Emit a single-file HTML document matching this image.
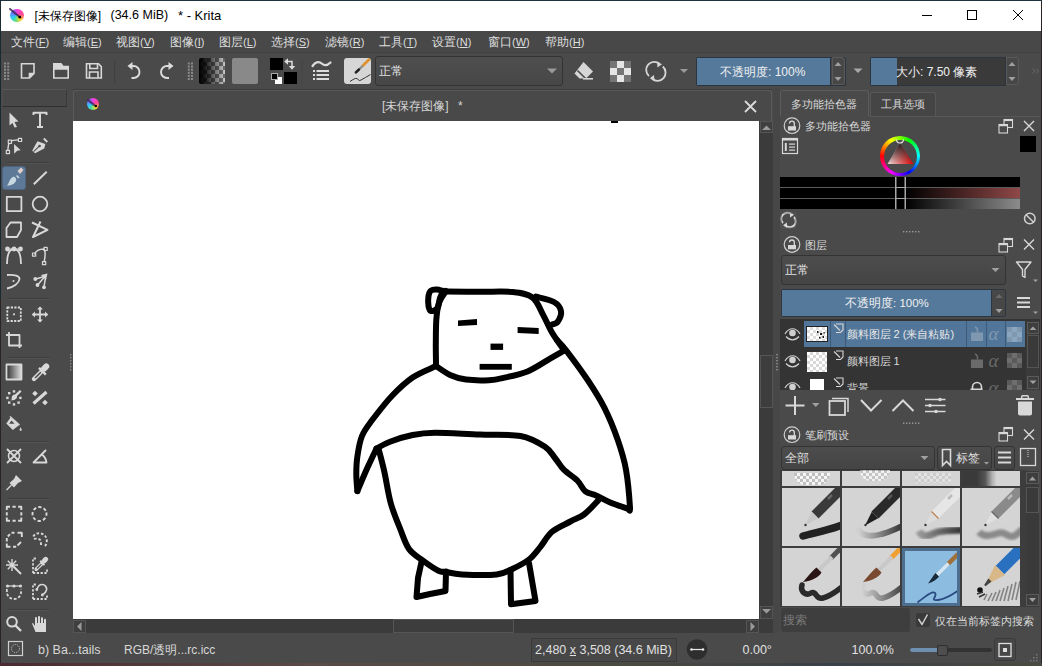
<!DOCTYPE html>
<html><head><meta charset="utf-8">
<style>
*{margin:0;padding:0;box-sizing:border-box}
html,body{width:1042px;height:666px;overflow:hidden;background:#3a2a2a;font-family:"Liberation Sans",sans-serif;}
.a{position:absolute}
.t{position:absolute;white-space:nowrap;color:#dcdcdc;font-size:12px;line-height:14px}
svg{position:absolute;overflow:visible}
</style></head><body>
<div class="a" style="left:0;top:0;width:1042px;height:666px;background:#2b2424"></div>
<div class="a" style="left:0;top:663px;width:1042px;height:3px;background:linear-gradient(90deg,#4a2a30,#5a4a48 30%,#4a4a40 60%,#3a4048 80%,#4a4a40)"></div>
<div class="a" style="left:0;top:0;width:1042px;height:1px;background:#1d3440"></div>
<div class="a" style="left:0;top:0;width:1px;height:300px;background:#1a2a30"></div>
<!-- window -->
<div class="a" style="left:1px;top:1px;width:1040px;height:662px;background:#4a4a4a"></div>
<!-- title bar -->
<div class="a" style="left:1px;top:1px;width:1040px;height:30px;background:#ffffff"></div>
<div class="a" style="left:10.3px;top:8.5px;width:13.4px;height:13.4px;border-radius:50%;background:conic-gradient(#f040e0 0deg,#ff4a90 80deg,#ffd830 140deg,#50e090 200deg,#30c8ff 250deg,#7a60ff 310deg,#f040e0 360deg)"></div>
<svg style="left:0;top:0" width="30" height="30"><path d="M10,9 L18.5,16" stroke="#3a2a50" stroke-width="2" stroke-linecap="round" opacity=".85"/><circle cx="19.8" cy="17.2" r="1.4" fill="#000"/></svg>
<div class="t" style="left:34.5px;top:8.5px;color:#000;font-size:12px;line-height:15px">[未保存图像]</div>
<div class="t" style="left:110.5px;top:8px;color:#000;font-size:12.5px;line-height:15px">(34.6 MiB)</div>
<div class="t" style="left:178px;top:8px;color:#000;font-size:13px;line-height:15px">* - Krita</div>
<svg style="left:0;top:0" width="1042" height="31" fill="none" stroke="#000" stroke-width="1">
<path d="M922,15.5 H932"/>
<rect x="967.5" y="10.5" width="9" height="9"/>
<path d="M1013,10 L1023,20 M1023,10 L1013,20"/>
</svg>
<!-- menu bar -->
<div class="a" style="left:1px;top:31px;width:1040px;height:22px;background:#484848"></div>
<div class="a" style="left:1px;top:52px;width:1040px;height:1px;background:#404040"></div>
<div class="t mi" style="left:11px;top:35px;color:#dedede">文件<span style="font-size:11px">(<u style="text-underline-offset:1px">F</u>)</span></div>
<div class="t mi" style="left:63px;top:35px;color:#dedede">编辑<span style="font-size:11px">(<u style="text-underline-offset:1px">E</u>)</span></div>
<div class="t mi" style="left:116px;top:35px;color:#dedede">视图<span style="font-size:11px">(<u style="text-underline-offset:1px">V</u>)</span></div>
<div class="t mi" style="left:170px;top:35px;color:#dedede">图像<span style="font-size:11px">(<u style="text-underline-offset:1px">I</u>)</span></div>
<div class="t mi" style="left:219px;top:35px;color:#dedede">图层<span style="font-size:11px">(<u style="text-underline-offset:1px">L</u>)</span></div>
<div class="t mi" style="left:271px;top:35px;color:#dedede">选择<span style="font-size:11px">(<u style="text-underline-offset:1px">S</u>)</span></div>
<div class="t mi" style="left:325px;top:35px;color:#dedede">滤镜<span style="font-size:11px">(<u style="text-underline-offset:1px">R</u>)</span></div>
<div class="t mi" style="left:379px;top:35px;color:#dedede">工具<span style="font-size:11px">(<u style="text-underline-offset:1px">T</u>)</span></div>
<div class="t mi" style="left:432px;top:35px;color:#dedede">设置<span style="font-size:11px">(<u style="text-underline-offset:1px">N</u>)</span></div>
<div class="t mi" style="left:488px;top:35px;color:#dedede">窗口<span style="font-size:11px">(<u style="text-underline-offset:1px">W</u>)</span></div>
<div class="t mi" style="left:545px;top:35px;color:#dedede">帮助<span style="font-size:11px">(<u style="text-underline-offset:1px">H</u>)</span></div>
<!-- toolbar -->
<div class="a" style="left:1px;top:53px;width:1040px;height:35px;background:#4a4a4a"></div>
<svg style="left:0;top:0" width="1042" height="90">
<g fill="#8a8a8a"><rect x="4.0" y="62.5" width="2" height="2"/><rect x="7.2" y="62.5" width="2" height="2"/><rect x="4.0" y="65.6" width="2" height="2"/><rect x="7.2" y="65.6" width="2" height="2"/><rect x="4.0" y="68.7" width="2" height="2"/><rect x="7.2" y="68.7" width="2" height="2"/><rect x="4.0" y="71.8" width="2" height="2"/><rect x="7.2" y="71.8" width="2" height="2"/><rect x="4.0" y="74.9" width="2" height="2"/><rect x="7.2" y="74.9" width="2" height="2"/><rect x="4.0" y="78.0" width="2" height="2"/><rect x="7.2" y="78.0" width="2" height="2"/></g>
<g fill="none" stroke="#d8d8d8" stroke-width="1.6">
 <path d="M21.5,63.8 H34 V73.5 L29.5,78 H21.5 Z"/>
 <path d="M29.5,78 V73.5 H34" fill="#d8d8d8"/>
 <path d="M53.8,63.8 H61 L63,66.5 H68.2 V78 H53.8 Z"/>
 <path d="M53.8,63.8 H61 L63,66.5 H68.2 V69.8 H53.8 Z" fill="#d8d8d8" stroke="none"/>
 <path d="M86.5,63.8 H98.5 L101.3,66.6 V78 H86.5 Z"/>
 <path d="M89.8,63.8 V68.5 H97.5 V63.8"/>
 <path d="M89.5,78 V72 H98 V78"/>
</g>
<rect x="114.2" y="60" width="1" height="23" fill="#3e3e3e"/>
<g fill="none" stroke="#dcdcdc" stroke-width="1.9">
 <path d="M131,66 H133.5 A6,6 0 0 1 133.5,78 H131.5"/>
 <path d="M169.5,66 H167 A6,6 0 0 0 167,78 H169"/>
</g>
<g fill="#dcdcdc">
 <path d="M127.5,66 L132.5,62 V70 Z"/>
 <path d="M173.5,66 L168.5,62 V70 Z"/>
</g>
<g fill="#8a8a8a"><rect x="187.8" y="62.5" width="2" height="2"/><rect x="191.0" y="62.5" width="2" height="2"/><rect x="187.8" y="65.6" width="2" height="2"/><rect x="191.0" y="65.6" width="2" height="2"/><rect x="187.8" y="68.7" width="2" height="2"/><rect x="191.0" y="68.7" width="2" height="2"/><rect x="187.8" y="71.8" width="2" height="2"/><rect x="191.0" y="71.8" width="2" height="2"/><rect x="187.8" y="74.9" width="2" height="2"/><rect x="191.0" y="74.9" width="2" height="2"/><rect x="187.8" y="78.0" width="2" height="2"/><rect x="191.0" y="78.0" width="2" height="2"/></g>
</svg>

<!-- toolbar part 2 -->
<div class="a" style="left:199px;top:58px;width:26px;height:26px;border-radius:2px;background:linear-gradient(90deg,#000 0%,rgba(0,0,0,.85) 25%,rgba(0,0,0,0) 100%),conic-gradient(#c8c8c8 25%,#6e6e6e 0 50%,#c8c8c8 0 75%,#6e6e6e 0) 0 0/8px 8px"></div>
<div class="a" style="left:232px;top:58px;width:26px;height:26px;border-radius:2px;background:#898989"></div>
<div class="a" style="left:270px;top:57.5px;width:12.5px;height:12.5px;background:#000"></div>
<div class="a" style="left:284px;top:72px;width:12.5px;height:12px;background:#000"></div>
<div class="a" style="left:274.5px;top:76.5px;width:7px;height:7px;background:#fff"></div>
<div class="a" style="left:270.5px;top:72.5px;width:7px;height:7px;background:#000;border:1px solid #aaa"></div>
<svg style="left:0;top:0" width="1042" height="90">
 <g fill="none" stroke="#dcdcdc" stroke-width="1.5"><path d="M287,61.5 H292 V66"/></g>
 <g fill="#dcdcdc"><path d="M284.2,61.5 L288,58.3 V64.7 Z"/><path d="M292,69.8 L288.8,66 H295.2 Z"/></g>
 <rect x="301.5" y="60" width="1" height="23" fill="#444"/>
 <path d="M312.5,66 C316,61 319.5,61.5 322,63.8 C324.5,66 327,66 330.5,62.5" fill="none" stroke="#dcdcdc" stroke-width="2.2" stroke-linecap="round"/>
 <g fill="#dcdcdc"><rect x="313" y="70" width="2" height="2"/><rect x="316.5" y="70" width="12.5" height="2"/>
 <rect x="313" y="74" width="2" height="2"/><rect x="316.5" y="74" width="12.5" height="2"/>
 <rect x="313" y="78" width="2" height="2"/><rect x="316.5" y="78" width="12.5" height="2"/></g>
</svg>
<div class="a" style="left:344px;top:58px;width:26.5px;height:26px;border-radius:3px;background:#d6d6d6;overflow:hidden">
 <svg style="left:0;top:0" width="27" height="26">
  <path d="M26,0.5 L18.5,8" stroke="#e0902a" stroke-width="2.6"/>
  <path d="M18.8,7.7 L14.5,12" stroke="#8a8a8a" stroke-width="2.2"/>
  <path d="M15,11.5 L11.8,14.5" stroke="#222" stroke-width="2.4" stroke-linecap="round"/>
  <path d="M6,23.5 C9,21.5 11,20 13,20.5 C15,21.5 14,23.5 17,22 C20,20.5 23,18.5 26.5,16.5" fill="none" stroke="#333" stroke-width="1"/>
 </svg>
</div>
<!-- blend combo -->
<div class="a" style="left:375px;top:56px;width:188px;height:30px;border:1px solid #333;border-radius:3px;background:linear-gradient(#4e4e4e,#474747)"></div>
<div class="t" style="left:379px;top:64px;font-size:12px;color:#e0e0e0">正常</div>
<svg style="left:0;top:0" width="1042" height="90"><path d="M547,68.5 H557 L552,73.5 Z" fill="#9a9a9a"/></svg>
<svg style="left:0;top:0" width="1042" height="90">
 <g fill="#d6d6d6">
  <path d="M583.5,62 L593,71.5 L586,78.5 H579.5 L574.5,73.5 Z"/>
 </g>
 <path d="M577.5,70.5 L586.5,79.5" stroke="#4a4a4a" stroke-width="1.6"/>
 <rect x="583" y="78" width="10" height="1.6" fill="#d6d6d6"/>
 <g fill="#757575"><rect x="610" y="61" width="21" height="21"/></g>
 <g fill="#e6e6e6"><rect x="617" y="61" width="7" height="7"/><rect x="610" y="68" width="7" height="7"/><rect x="624" y="68" width="7" height="7"/><rect x="617" y="75" width="7" height="7"/></g>
 <g fill="none" stroke="#d6d6d6" stroke-width="1.8">
  <path d="M649,76 A8,8 0 0 1 659.5,63.8"/>
  <path d="M662.8,66.5 A8,8 0 0 1 652,78.8"/>
 </g>
 <g fill="#d6d6d6"><path d="M657,61.8 L662,64.2 L657.5,67.5 Z"/><path d="M654.5,80.8 L649.8,78.2 L654,75 Z"/></g>
 <path d="M680,69 H688 L684,73 Z" fill="#9a9a9a"/>
</svg>
<!-- opacity slider -->
<div class="a" style="left:696px;top:56.5px;width:150px;height:29px;border:1px solid #2a3540;border-radius:2px;background:#474747"></div>
<div class="a" style="left:697px;top:57.5px;width:134px;height:27px;background:#55799b;border-right:1px solid #2a3540"></div>
<div class="a" style="left:832px;top:57px;width:13px;height:28px;border:1px solid #5a5a5a;border-radius:0 3px 3px 0"></div>
<div class="t" style="left:720px;top:64.5px;font-size:12px;color:#f0f0f0">不透明度: 100%</div>
<svg style="left:0;top:0" width="1042" height="90">
 <path d="M834.5,66 L838,62 L841.5,66 Z M834.5,77 L838,81 L841.5,77 Z" fill="#a0a0a0"/>
 <path d="M853.5,68.5 H862.5 L858,73 Z" fill="#a8a8a8"/>
</svg>
<!-- size slider -->
<div class="a" style="left:870px;top:56.5px;width:136px;height:29px;border:1px solid #2a3540;border-radius:2px 0 0 2px;background:#3a3a3a"></div>
<div class="a" style="left:871px;top:57.5px;width:26px;height:27px;background:#55799b"></div>
<div class="a" style="left:1006px;top:57px;width:13px;height:28px;border:1px solid #5a5a5a;border-radius:0 3px 3px 0;background:#474747"></div>
<div class="t" style="left:896px;top:64.5px;font-size:12px;color:#f0f0f0">大小: 7.50 像素</div>
<svg style="left:0;top:0" width="1042" height="90">
 <path d="M1008.5,66 L1012,62 L1015.5,66 Z M1008.5,77 L1012,81 L1015.5,77 Z" fill="#a0a0a0"/>
</svg>
<!-- left toolbox -->
<div class="a" style="left:1px;top:88px;width:71px;height:545px;background:#4a4a4a"></div>
<div class="a" style="left:1.5px;top:89px;width:65px;height:18px;border:1px solid #3a3a3a;border-top-color:#585858;border-left-color:#505050;border-bottom-color:#2e2e2e;background:#484848"></div>

<div class="a" style="left:2px;top:166px;width:23.5px;height:24px;border-radius:3px;background:#5d7997;border:1px solid #4d6580"></div>
<svg style="left:0;top:0" width="80" height="640">
<g fill="none" stroke="#d8d8d8" stroke-width="1.8" stroke-linejoin="round">
 <!-- separators -->
 <path d="M7,162.5 H50 M7,298.5 H50 M7,357.5 H50 M7,441.5 H50 M7,498.5 H50 M7,609.5 H50" stroke="#3e3e3e" stroke-width="1"/><path d="M7,163.5 H50 M7,299.5 H50 M7,358.5 H50 M7,442.5 H50 M7,499.5 H50 M7,610.5 H50" stroke="#535353" stroke-width="1"/>
 <!-- A: arrow, T -->
 <path d="M9.5,112.5 L18.5,121.5 L14.5,122 L17,127 L14.5,127.5 L12.5,123 L9.5,125.5 Z" fill="#d8d8d8" stroke="none"/>
 <path d="M33.5,115 V112.8 H46.5 V115 M40,113 V127 M37,127 H43" stroke-width="2"/>
 <!-- B: shape edit, pen -->
 <path d="M7.9,150.5 C8,146.5 8.5,143.5 9.9,141.7 C12,140.3 15.5,139.9 18.5,139.9" stroke-width="1.4"/>
 <rect x="8.3" y="140.1" width="3.2" height="3.2" fill="#4a4a4a" stroke-width="1.2"/>
 <rect x="18.4" y="138.3" width="3.2" height="3.2" fill="#4a4a4a" stroke-width="1.2"/>
 <rect x="6.3" y="150.4" width="3.2" height="3.2" fill="#4a4a4a" stroke-width="1.2"/>
 <path d="M14,144 L20.7,150.3 L17.2,150.8 L14.2,153.7 Z" fill="#d8d8d8" stroke="none"/>
 <path d="M37.5,141.2 L45.4,144 L44.2,148.4 L35.1,153.2 L32.2,150.8 L35.6,144.6 Z" fill="#d8d8d8" stroke="none"/>
 <path d="M43.8,138.5 L47.3,142" stroke-width="1.8"/>
 <path d="M39.4,146.2 L33.6,151.6" stroke="#4a4a4a" stroke-width="1.1"/>
 <circle cx="39.6" cy="146" r="1.3" fill="#4a4a4a" stroke="none"/>
 <!-- C: brush, line -->
 <path d="M17.5,171 L21,167.5 L23.5,170 L20,174 Z" fill="#e0d0cc" stroke="none"/>
 <path d="M16.5,175.5 L19,178" stroke="#c8d8e0" stroke-width="1.6"/>
 <path d="M14.5,177 C16,178 17,179.5 15.5,182 C13,185 9,186 6.5,185.5 C9,184.5 8.5,181.5 11,178.5 C12.5,177 13.5,176.5 14.5,177 Z" fill="#c8d8e0" stroke="none"/>
 <path d="M33.8,184.2 L46.7,171.8" stroke-width="2"/>
 <!-- D -->
 <rect x="6.8" y="196.8" width="14.6" height="14.4" stroke-width="1.8"/>
 <circle cx="40" cy="204" r="7.3" stroke-width="1.8"/>
 <!-- E: polygon, polyline -->
 <path d="M10.5,222.5 H21 V230 L17,237 H6.5 V228 Z"/>
 <path d="M32,222.5 L47.5,229.8 L33,237 L40.5,221.5" stroke-width="2"/>
 <!-- F: bezier, freehand path -->
 <path d="M7,264 C7,252 10,249 14,249 C18,249 21,252 21,264"/>
 <path d="M6,249 H22" stroke-width="1"/>
 <circle cx="7.5" cy="249" r="1.5" fill="#d8d8d8"/><circle cx="14" cy="249" r="1.5" fill="#d8d8d8"/><circle cx="20.5" cy="249" r="1.5" fill="#d8d8d8"/>
 <path d="M34.5,254.5 C36,250 39,249 44,249 C46,252 45,258 44,262.5" stroke-width="1.5"/>
 <rect x="32.5" y="253" width="3.2" height="3.2" stroke-width="1.2"/>
 <rect x="44" y="247.3" width="3.2" height="3.2" stroke-width="1.2"/>
 <rect x="42.5" y="261.5" width="3.2" height="3.2" stroke-width="1.2"/>
 <!-- G: dyna, multibrush -->
 <path d="M7,288.5 C14,287 19,283 19.5,279 C19.5,276 15,274.5 7,275"/>
 <circle cx="13.5" cy="281" r="1" fill="#d8d8d8" stroke="none"/>
 <path d="M41,275 L47.5,273.5 L46,280 Z" fill="#d8d8d8" stroke="none"/>
 <path d="M44,276.5 L36,279 M44.5,277 L38,284.5 M45.5,278 L44,286.5" stroke-width="1.5"/>
 <circle cx="35.3" cy="279" r="1.9" fill="#d8d8d8" stroke="none"/><circle cx="37.5" cy="285" r="1.9" fill="#d8d8d8" stroke="none"/><circle cx="44" cy="287.3" r="1.9" fill="#d8d8d8" stroke="none"/>
 <!-- H: transform, move -->
 <rect x="7.3" y="307.5" width="13.5" height="13.5" stroke-dasharray="2.2 1.3" stroke-width="1.8"/>
 <circle cx="14" cy="314.3" r="1.1" fill="#d8d8d8" stroke="none"/>
 <path d="M32.5,314.5 H47.5 M40,307 V322" stroke-width="1.8"/>
 <path d="M32,314.5 L35,311.5 V317.5 Z M48,314.5 L45,311.5 V317.5 Z M40,306.5 L37,309.5 H43 Z M40,322.5 L37,319.5 H43 Z" fill="#d8d8d8" stroke="none"/>
 <!-- I: crop -->
 <path d="M9,332 V345.5 H22 M6,335 H19.5 V348"/>
</g>
</svg>
<svg style="left:0;top:0" width="80" height="640">
<defs><linearGradient id="gg" x1="0" x2="1" y1="0" y2="0"><stop offset="0" stop-color="#303030"/><stop offset="1" stop-color="#e0e0e0"/></linearGradient></defs>
<g fill="none" stroke="#d8d8d8" stroke-width="1.8" stroke-linejoin="round">
 <!-- J: gradient, picker -->
 <rect x="6.5" y="364.5" width="15" height="15" stroke-width="1.8" fill="url(#gg)"/>
 <rect x="42.2" y="363" width="6" height="9" rx="3" fill="#d8d8d8" stroke="none" transform="rotate(45 45.2 367.5)"/>
 <path d="M39,367.8 L45.8,374.6" stroke-width="2.4"/>
 <path d="M41.5,371.5 L34,379" stroke-width="4.4" stroke-linecap="round"/>
 <path d="M40.8,372.2 L35,378" stroke="#4a4a4a" stroke-width="1.5"/>
 <!-- K: smart patch, % -->
 <path d="M12,399.5 C11,397 12.5,394.5 15,394.5 L20,390 L21.5,391.5 L17,396 C17.5,399 14,401 10,400 Z" fill="#d8d8d8" stroke="none"/>
 <g fill="#d8d8d8" stroke="none"><rect x="8" y="392" width="2.4" height="2.4"/><rect x="12.8" y="390.2" width="2.4" height="2.4"/><rect x="6.2" y="396.7" width="2.4" height="2.4"/><rect x="19.2" y="396.7" width="2.4" height="2.4"/><rect x="8" y="401.4" width="2.4" height="2.4"/><rect x="12.8" y="403.2" width="2.4" height="2.4"/><rect x="17.4" y="401.4" width="2.4" height="2.4"/></g>
 <path d="M33.5,403.5 L46.5,392" stroke-width="3.2"/>
 <rect x="33" y="391.5" width="4" height="4" fill="#d8d8d8" stroke="none" transform="rotate(45 35 393.5)"/>
 <rect x="43" y="400.5" width="4" height="4" fill="#d8d8d8" stroke="none" transform="rotate(45 45 402.5)"/>
 <!-- L: fill -->
 <path d="M10.6,417.5 L6.3,423.5 L12.8,430 L19.3,424.9 Z" fill="#d8d8d8" stroke="none"/>
 <path d="M11.4,420.6 L9.2,423.8 H14.6 Z" fill="#4a4a4a" stroke="none"/>
 <path d="M10,416.5 L19.5,425" stroke-width="1.4"/>
 <path d="M20.5,427 L19.5,430 A1.2,1.2 0 0 0 21.8,430 Z" fill="#d8d8d8" stroke="none"/>
 <!-- M: assistant, measure -->
 <circle cx="14" cy="456" r="5.5" stroke-width="1.5"/>
 <path d="M7,449 L21,463 M21,449 L7,463" stroke-width="1.8"/>
 <path d="M46,450 L33.5,462.5 H46.5 C46,459 44.5,456.5 42,454.5" stroke-width="1.8"/>
 <!-- N: pin -->
 <path d="M16,475 L22,481 L18,483 L14,487.5 L9.5,483 L14,479 Z" fill="#d8d8d8" stroke="none"/>
 <path d="M11.5,485 L6.5,490" stroke-width="1.2"/>
 <!-- O: rect select, ellipse select -->
 <path d="M6.8,510.0 V506.8 H10.0 M18.1,506.8 H21.3 V510.0 M21.3,517.6 V520.8 H18.1 M10.0,520.8 H6.8 V517.6 M12.5,506.8 H15.7 M12.5,520.8 H15.7 M6.8,512.2 V515.4 M21.3,512.2 V515.4" stroke-width="1.9"/>
 <circle cx="39.5" cy="514" r="7" stroke-dasharray="3.3 2.2" stroke-width="1.9" transform="rotate(-12 39.5 514)"/>
 <!-- P: polygon select, freehand select -->
 <path d="M21.8,537 V532.8 H17.5 M14.5,532.8 H11.5 M10,534.2 L7.8,536.5 M6.8,538 V541.5 M6.8,543.5 V546.8 H10.5 M13,546.8 H16.2 M17.5,545.5 L21,542" stroke-width="1.9"/>
 <path d="M33.3,536.5 C35,533.5 38,532.8 41,533.5 C45,534.5 47,537.5 46.8,541.5 C46.5,544 45.5,546 44,547.2 M34,538.9 C36,538.5 38.5,538.5 40,539.8 C41,541.5 41,544 41,546" stroke-dasharray="2.6 1.8" stroke-width="1.9"/>
 <!-- Q: magic wand, similar -->
 <path d="M13.5,566.5 L21,574" stroke-width="2"/>
 <path d="M12,559 V571 M6,565 H18 M7.8,560.8 L16.2,569.2 M16.2,560.8 L7.8,569.2" stroke-width="1.4"/>
 <path d="M33,573 V558.5 H37.5 M33,573 H47 V568.5" stroke-width="1.8" stroke-dasharray="2.2 1.6"/>
 <rect x="42.5" y="556.5" width="5" height="7" rx="2.5" fill="#d8d8d8" stroke="none" transform="rotate(45 45 560)"/>
 <path d="M40.2,560.8 L44.5,565.1" stroke-width="2"/>
 <path d="M42,563.5 L36.2,569.3" stroke-width="3.6" stroke-linecap="round"/>
 <path d="M41.3,564.2 L37,568.5" stroke="#4a4a4a" stroke-width="1.2"/>
 <!-- R: bezier select, magnetic -->
 <path d="M7,586 H21" stroke-width="1.2"/>
 <circle cx="7.5" cy="586" r="1.6" fill="#d8d8d8" stroke="none"/><circle cx="14" cy="586" r="1.6" fill="#d8d8d8" stroke="none"/><circle cx="20.5" cy="586" r="1.6" fill="#d8d8d8" stroke="none"/>
 <path d="M7,589 C6,596 10,599 14,599 C18,599 22,596 21,589" stroke-dasharray="2.8 1.8"/>
 <path d="M33,599 V584.5 H37 M33,599 H47 V595" stroke-width="1.8" stroke-dasharray="2.2 1.6"/>
 <path d="M37,589.5 C38,585.5 40,584.5 42,584.5 C45,584.5 47,587 46.5,590 C46,592 44,594 42.5,595" stroke-width="1.6"/>
 <circle cx="36.8" cy="589.5" r="1.4" fill="#d8d8d8" stroke="none"/><circle cx="42.3" cy="595" r="1.4" fill="#d8d8d8" stroke="none"/>
 <!-- S: zoom, hand -->
 <circle cx="12" cy="621.8" r="4.8" stroke-width="2"/>
 <path d="M15.5,625.5 L21,631" stroke-width="2.4"/>
 <g fill="#d8d8d8" stroke="none">
  <rect x="35" y="617" width="2" height="9" rx="0.9"/><rect x="38" y="616" width="2" height="10" rx="0.9"/><rect x="41" y="617.3" width="2" height="9" rx="0.9"/><rect x="44" y="618.8" width="2" height="8" rx="0.9"/>
  <path d="M35,623 H46 V632 H35.5 L32,623.5 L33,623 L35,626 Z"/>
 </g>
</g>
</svg>
<!-- canvas tab -->
<div class="a" style="left:73px;top:89px;width:699px;height:1px;background:#3c3c3c"></div>
<div class="a" style="left:73px;top:90px;width:699px;height:31px;background:#494949;border:1px solid #5a5a5a;border-bottom:none;border-radius:3px 3px 0 0"></div>
<div class="a" style="left:86.7px;top:97.7px;width:12.6px;height:12.6px;border-radius:50%;background:conic-gradient(#f040e0 0deg,#ff4a90 80deg,#ffd830 140deg,#50e090 200deg,#30c8ff 250deg,#7a60ff 310deg,#f040e0 360deg)"></div>
<svg style="left:0;top:0" width="800" height="130">
 <path d="M88,100 L94,104.8" stroke="#402a60" stroke-width="2.2" stroke-linecap="round" opacity=".85"/><circle cx="95.8" cy="106" r="1.3" fill="#000"/>
 <path d="M745,101 L756,112 M756,101 L745,112" stroke="#dadada" stroke-width="1.8"/>
</svg>
<div class="t" style="left:382px;top:99px;color:#d4d4d4">[未保存图像]</div>
<div class="t" style="left:458px;top:99px;color:#d4d4d4">*</div>
<!-- canvas -->
<div class="a" style="left:73px;top:121px;width:686px;height:498px;background:#ffffff;overflow:hidden">
<svg width="1042" height="666" style="left:-73px;top:-121px" fill="none" stroke="#000" stroke-width="6" stroke-linecap="round" stroke-linejoin="round">
<path d="M446.0,291.5 C451.7,291.6 468.9,291.7 480.0,291.8 C491.1,291.9 503.9,291.1 512.6,292.0 C521.4,292.9 527.4,293.7 532.5,297.5 C537.6,301.3 539.8,308.8 543.0,314.6 C546.2,320.5 548.7,326.9 552.0,332.6 C555.3,338.3 561.2,346.1 563.0,348.8"/>
<path d="M446.0,291.0 C444.8,293.0 440.6,298.2 439.0,303.0 C437.4,307.8 436.8,313.0 436.3,320.0 C435.8,327.0 435.9,337.7 435.8,345.0 C435.8,352.3 436.0,360.8 436.0,364.0"/>
<path d="M436.0,366.0 C438.4,367.6 445.7,373.0 450.7,375.3 C455.7,377.6 459.6,378.8 466.0,379.6 C472.4,380.4 482.6,380.5 489.0,380.2 C495.4,379.9 498.1,379.1 504.5,377.6 C510.9,376.2 519.8,374.7 527.5,371.5 C535.2,368.3 544.4,361.9 550.5,358.4 C556.6,354.9 561.8,352.0 564.0,350.7"/>
<path d="M443.5,291.0 C442.9,292.2 441.0,295.2 440.0,298.0 C439.0,300.8 439.0,305.8 437.5,308.0 C436.0,310.2 432.5,311.3 431.0,311.0 C429.5,310.7 428.9,308.5 428.5,306.0 C428.1,303.5 428.1,298.6 428.5,296.0 C428.9,293.4 429.6,291.6 431.0,290.5 C432.4,289.4 435.0,289.4 437.0,289.5 C439.0,289.6 442.0,290.8 443.0,291.0"/>
<path d="M536.0,296.6 C539.0,297.5 549.8,299.6 554.0,302.0 C558.2,304.4 560.4,307.7 561.0,311.0 C561.6,314.3 559.2,319.6 557.7,321.8 C556.2,324.1 553.0,324.1 552.0,324.5"/>
<path d="M435.4,366.3 C431.6,368.2 419.8,372.6 412.6,377.5 C405.4,382.4 399.1,388.4 392.3,395.5 C385.5,402.6 377.1,413.6 372.0,420.3 C366.9,427.1 364.4,430.0 362.0,436.0 C359.6,442.0 358.3,450.0 357.4,456.4 C356.4,462.8 356.3,468.6 356.3,474.4 C356.3,480.2 357.2,488.5 357.4,491.3"/>
<path d="M357.4,491.0 C359.1,487.1 364.3,474.7 367.5,467.6 C370.7,460.5 375.0,451.7 376.5,448.5"/>
<path d="M376.5,448.5 C378.8,447.4 384.0,443.9 390.0,441.7 C396.0,439.4 405.1,436.5 412.6,435.0 C420.1,433.5 423.8,432.8 435.0,432.7 C446.2,432.6 465.8,434.1 480.0,434.6 C494.2,435.2 509.7,434.0 520.5,436.0 C531.3,438.0 539.1,443.0 545.0,446.8 C550.9,450.6 552.6,455.2 555.7,459.0 C558.8,462.8 560.2,466.1 563.8,469.7 C567.4,473.3 573.7,476.9 577.3,480.5 C580.9,484.1 582.3,488.9 585.4,491.4 C588.5,493.9 592.0,493.6 596.0,495.4 C600.0,497.2 604.3,499.9 609.7,502.2 C615.1,504.5 625.5,507.9 628.6,509.0"/>
<path d="M378.8,449.6 C379.7,453.3 382.4,463.1 384.4,472.0 C386.4,480.9 388.1,493.6 390.7,503.0 C393.3,512.4 396.9,520.7 400.0,528.4 C403.1,536.1 405.2,543.6 409.0,549.0 C412.8,554.4 418.0,556.9 423.0,560.6 C428.0,564.3 435.2,569.2 439.0,571.0 C442.8,572.8 444.8,571.4 446.0,571.5"/>
<path d="M446.0,572.0 C448.7,572.4 453.6,574.0 462.0,574.4 C470.4,574.8 488.2,575.3 496.7,574.4 C505.2,573.5 507.4,571.2 512.8,568.7 C518.2,566.2 524.4,563.1 529.0,559.5 C533.6,555.9 536.6,551.4 540.4,546.8 C544.2,542.2 547.0,536.0 552.0,531.8 C557.0,527.6 565.1,524.4 570.4,521.5 C575.7,518.6 579.4,518.0 584.0,514.5 C588.6,511.0 595.7,503.0 598.0,500.7"/>
<path d="M421.8,560.6 L418,578 L416.5,597 L430,594 L445.5,591 L446,572"/>
<path d="M510.5,570 L511,604.2 L535.5,601 L529,563"/>
<path d="M557.0,340.0 C558.6,341.8 561.3,344.1 566.5,350.8 C571.7,357.6 581.7,371.0 588.0,380.5 C594.3,390.0 599.3,397.7 604.3,407.6 C609.3,417.5 614.2,429.6 617.8,440.0 C621.4,450.4 624.0,458.4 626.0,469.7 C628.0,481.0 629.6,501.1 630.0,507.6 C630.4,514.1 628.8,508.8 628.6,509.0"/>
<g fill="#000" stroke="none">
<path d="M458,320.5 L477,319 V325 L458,326 Z"/>
<path d="M517.6,327 L538.7,328 V334 L517.6,333 Z"/>
<rect x="490.5" y="343.6" width="12.6" height="6.3"/>
<rect x="479.6" y="363.9" width="32.2" height="5.8"/>
</g>
</svg>
<div class="a" style="left:538px;top:0;width:7px;height:2px;background:#000"></div>
</div>
<!-- v scrollbar -->
<div class="a" style="left:759px;top:121px;width:14px;height:498px;background:#3b3b3b"></div>
<div class="a" style="left:760px;top:121px;width:13px;height:12px;border:1px solid #555;background:#3f3f3f"></div>
<div class="a" style="left:760px;top:355px;width:13px;height:53px;border:1px solid #555;background:#3d3d3d"></div>
<div class="a" style="left:760px;top:606px;width:13px;height:13px;border:1px solid #555;background:#3f3f3f"></div>
<!-- h scrollbar -->
<div class="a" style="left:73px;top:619px;width:700px;height:14px;background:#3b3b3b"></div>
<div class="a" style="left:73px;top:620px;width:13px;height:13px;border:1px solid #555;background:#3f3f3f"></div>
<div class="a" style="left:393px;top:619px;width:121px;height:14px;border:1px solid #555;background:#3d3d3d"></div>
<div class="a" style="left:746px;top:620px;width:13px;height:13px;border:1px solid #555;background:#3f3f3f"></div>
<svg style="left:0;top:0" width="800" height="640">
 <path d="M762,130 L766.5,125.5 L771,130 Z M762,609 L766.5,613.5 L771,609 Z" fill="#9a9a9a"/>
 <path d="M81.5,622 L77,626.5 L81.5,631 Z M750.5,622 L755,626.5 L750.5,631 Z" fill="#9a9a9a"/>
</svg>
<div class="a" style="left:773px;top:88px;width:7px;height:545px;background:#474747"></div>

<!-- right dock -->
<div class="a" style="left:780px;top:88px;width:260px;height:545px;background:#4a4a4a"></div>
<div class="a" style="left:870px;top:92px;width:66px;height:25px;background:#454545;border:1px solid #575757;border-bottom:none;border-radius:3px 3px 0 0"></div>
<div class="a" style="left:780px;top:90px;width:89px;height:27px;background:#4a4a4a;border:1px solid #5c5c5c;border-bottom:none;border-radius:3px 3px 0 0"></div>
<div class="a" style="left:780px;top:116px;width:260px;height:1px;background:#575757"></div>
<div class="a" style="left:780px;top:116px;width:89px;height:1px;background:#4a4a4a"></div>
<div class="t" style="left:791px;top:97px;font-size:11px;color:#d8d8d8">多功能拾色器</div>
<div class="t" style="left:881px;top:97px;font-size:11px;color:#d8d8d8">工具选项</div>
<svg style="left:0;top:0" width="1042" height="666">
<circle cx="792.0" cy="125.7" r="7.8" fill="none" stroke="#d0d0d0" stroke-width="1.2"/>
<rect x="788.0" y="126.2" width="8" height="4.3" fill="#d8d8d8"/>
<path d="M794.3,126.7 V123.7 A2.4,2.4 0 0 0 789.5,123.5" fill="none" stroke="#d8d8d8" stroke-width="1.3"/>
<g fill="none" stroke="#d8d8d8" stroke-width="1.1"><rect x="1004.0" y="119.5" width="8.5" height="8"/><path d="M1004.0,120.1 H1012.5" stroke-width="2"/></g>
<rect x="999.0" y="124.5" width="8.5" height="8.5" fill="#4a4a4a"/>
<g fill="none" stroke="#d8d8d8" stroke-width="1.1"><rect x="999.0" y="124.5" width="8.5" height="8.5"/><path d="M999.0,125.2 H1007.5" stroke-width="2"/></g>
<path d="M1024.0,121.0 l10,10 M1034.0,121.0 l-10,10" stroke="#d8d8d8" stroke-width="1.4"/>
<circle cx="792.0" cy="244.5" r="7.8" fill="none" stroke="#d0d0d0" stroke-width="1.2"/>
<rect x="788.0" y="245.0" width="8" height="4.3" fill="#d8d8d8"/>
<path d="M794.3,245.5 V242.5 A2.4,2.4 0 0 0 789.5,242.3" fill="none" stroke="#d8d8d8" stroke-width="1.3"/>
<g fill="none" stroke="#d8d8d8" stroke-width="1.1"><rect x="1004.0" y="238.5" width="8.5" height="8"/><path d="M1004.0,239.1 H1012.5" stroke-width="2"/></g>
<rect x="999.0" y="243.5" width="8.5" height="8.5" fill="#4a4a4a"/>
<g fill="none" stroke="#d8d8d8" stroke-width="1.1"><rect x="999.0" y="243.5" width="8.5" height="8.5"/><path d="M999.0,244.2 H1007.5" stroke-width="2"/></g>
<path d="M1024.0,239.5 l10,10 M1034.0,239.5 l-10,10" stroke="#d8d8d8" stroke-width="1.4"/>
<circle cx="792.0" cy="434.7" r="7.8" fill="none" stroke="#d0d0d0" stroke-width="1.2"/>
<rect x="788.0" y="435.2" width="8" height="4.3" fill="#d8d8d8"/>
<path d="M794.3,435.7 V432.7 A2.4,2.4 0 0 0 789.5,432.5" fill="none" stroke="#d8d8d8" stroke-width="1.3"/>
<g fill="none" stroke="#d8d8d8" stroke-width="1.1"><rect x="1004.0" y="427.5" width="8.5" height="8"/><path d="M1004.0,428.1 H1012.5" stroke-width="2"/></g>
<rect x="999.0" y="432.5" width="8.5" height="8.5" fill="#4a4a4a"/>
<g fill="none" stroke="#d8d8d8" stroke-width="1.1"><rect x="999.0" y="432.5" width="8.5" height="8.5"/><path d="M999.0,433.2 H1007.5" stroke-width="2"/></g>
<path d="M1024.0,429.5 l10,10 M1034.0,429.5 l-10,10" stroke="#d8d8d8" stroke-width="1.4"/>
</svg>
<div class="t" style="left:805px;top:119px;font-size:11px;color:#d8d8d8">多功能拾色器</div>


<!-- color selector -->
<svg style="left:0;top:0" width="1042" height="666">
 <g fill="none" stroke="#d8d8d8" stroke-width="1.2"><rect x="782.5" y="138.5" width="15" height="15"/></g>
 <rect x="782" y="138" width="16" height="2.5" fill="#d8d8d8"/>
 <rect x="784.8" y="143" width="2" height="8" fill="#d8d8d8"/>
 <g fill="#d8d8d8"><rect x="789" y="143.5" width="6" height="1.2"/><rect x="789" y="146.5" width="6" height="1.2"/><rect x="789" y="149.5" width="6" height="1.2"/></g>
 <rect x="1020" y="136" width="16" height="16" fill="#000"/>
</svg>
<div class="a" style="left:880px;top:136px;width:40px;height:40px;border-radius:50%;background:conic-gradient(from 270deg,#ff0000,#ffff00,#00ff00,#00ffff,#0000ff,#ff00ff,#ff0000)"></div>
<div class="a" style="left:883.5px;top:139.5px;width:33px;height:33px;border-radius:50%;background:#4a4a4a"></div>
<svg style="left:0;top:0" width="1042" height="666">
 <defs>
  <linearGradient id="tr1" x1="0" y1="0" x2="1" y2="0"><stop offset="0" stop-color="#f0e0e0"/><stop offset="1" stop-color="#e00000"/></linearGradient>
  <linearGradient id="tr2" x1="0" y1="0" x2="0" y2="1"><stop offset="0" stop-color="#202020" stop-opacity="1"/><stop offset="1" stop-color="#202020" stop-opacity="0"/></linearGradient>
  <linearGradient id="sl2" x1="0" y1="0" x2="1" y2="0"><stop offset="0" stop-color="#000"/><stop offset="1" stop-color="#904848"/></linearGradient>
  <linearGradient id="sl3" x1="0" y1="0" x2="1" y2="0"><stop offset="0" stop-color="#000"/><stop offset="1" stop-color="#8c8c8c"/></linearGradient>
 </defs>
 <path d="M900,143 L913.5,164 H887.5 Z" fill="url(#tr1)"/>
 <path d="M900,143 L913.5,164 H887.5 Z" fill="url(#tr2)"/>
 <path d="M896.5,139.5 A3.5,3.5 0 0 0 903.5,139.5" fill="none" stroke="#e8e8e8" stroke-width="1.2"/>
 <rect x="780" y="177" width="240" height="10" fill="#000"/>
 <rect x="780" y="188" width="240" height="10" fill="#000"/>
 <rect x="905" y="188" width="115" height="10" fill="url(#sl2)"/>
 <rect x="780" y="199" width="240" height="10" fill="#000"/>
 <rect x="905" y="199" width="115" height="10" fill="url(#sl3)"/>
 <rect x="780" y="187" width="240" height="1" fill="#5a5a5a"/>
 <rect x="780" y="198" width="240" height="1" fill="#5a5a5a"/>
 <g fill="#a8a8a8"><rect x="895" y="177" width="1.5" height="32"/><rect x="904.5" y="177" width="1.5" height="32"/>
 <rect x="895" y="187" width="11" height="1"/><rect x="895" y="198" width="11" height="1"/></g>
 <g fill="none" stroke="#d8d8d8" stroke-width="1.8">
  <path d="M783,223 A6,6 0 0 1 791.5,214.5"/><path d="M794,217 A6,6 0 0 1 785.5,225.5"/>
 </g>
 <g fill="#d8d8d8"><path d="M790,212 L794,214.8 L790,217.5 Z"/><path d="M787,228 L783,225.2 L787,222.5 Z"/></g>
 <rect x="781" y="213" width="15" height="15" rx="2" fill="none" stroke="#5a5a5a" stroke-width="0.8"/>
 <circle cx="1029.8" cy="218.5" r="5.3" fill="none" stroke="#d0d0d0" stroke-width="1.5"/>
 <path d="M1026,214.8 L1033.6,222.2" stroke="#d0d0d0" stroke-width="1.5"/>
 <g fill="#9a9a9a">
  <rect x="903" y="231" width="1.4" height="1.4"/><rect x="906" y="231" width="1.4" height="1.4"/><rect x="909" y="231" width="1.4" height="1.4"/><rect x="912" y="231" width="1.4" height="1.4"/><rect x="915" y="231" width="1.4" height="1.4"/><rect x="918" y="231" width="1.4" height="1.4"/>
  <rect x="903" y="422.5" width="1.4" height="1.4"/><rect x="906" y="422.5" width="1.4" height="1.4"/><rect x="909" y="422.5" width="1.4" height="1.4"/><rect x="912" y="422.5" width="1.4" height="1.4"/><rect x="915" y="422.5" width="1.4" height="1.4"/><rect x="918" y="422.5" width="1.4" height="1.4"/>
  <rect x="776.3" y="354" width="1.4" height="1.4"/><rect x="776.3" y="357" width="1.4" height="1.4"/><rect x="776.3" y="360" width="1.4" height="1.4"/><rect x="776.3" y="363" width="1.4" height="1.4"/><rect x="776.3" y="366" width="1.4" height="1.4"/><rect x="776.3" y="369" width="1.4" height="1.4"/>
 </g>
</svg>
<!-- layers panel -->
<div class="t" style="left:805px;top:238px;font-size:11px;color:#d8d8d8">图层</div>
<div class="a" style="left:781px;top:255px;width:225px;height:30px;border:1px solid #333;border-radius:3px;background:linear-gradient(#4d4d4d,#444)"></div>
<div class="t" style="left:785px;top:263px;font-size:12px;color:#e0e0e0">正常</div>
<div class="a" style="left:781px;top:289px;width:225px;height:28px;border:1px solid #2d3640;border-radius:2px;background:#474747"></div>
<div class="a" style="left:782px;top:290px;width:210px;height:26px;background:#55799b;border-right:1px solid #2d3640"></div>
<div class="t" style="left:845px;top:296px;font-size:11.5px;color:#f0f0f0">不透明度: 100%</div>
<svg style="left:0;top:0" width="1042" height="666">
 <path d="M991.5,268 H999.5 L995.5,272 Z" fill="#a0a0a0"/>
 <path d="M1016.5,262 H1031 L1025,269.5 V277.5 L1022.5,276 V269.5 Z" fill="none" stroke="#d8d8d8" stroke-width="1.4" stroke-linejoin="round"/>
 <path d="M1033,279.5 H1038 L1035.5,282 Z" fill="#a0a0a0"/>
 <path d="M995.5,298 L999,294 L1002.5,298 Z" fill="#6a6a6a"/><path d="M995.5,309 L999,313 L1002.5,309 Z" fill="#a0a0a0"/>
 <g fill="#d8d8d8"><rect x="1017" y="297" width="13" height="2"/><rect x="1017" y="301.5" width="13" height="2"/><rect x="1017" y="306" width="13" height="2"/></g>
 <path d="M1033,311.5 H1038 L1035.5,314 Z" fill="#a0a0a0"/>
</svg>
<!-- layer list -->
<div class="a" style="left:780px;top:319px;width:260px;height:71px;background:#343434"></div>
<div class="a" style="left:804px;top:321px;width:221px;height:26px;background:#52769a"></div>
<div class="a" style="left:830px;top:321px;width:1.2px;height:26px;background:#3d5a78"></div>
<div class="a" style="left:845px;top:321px;width:1.2px;height:26px;background:#3d5a78"></div>
<div class="a" style="left:966px;top:321px;width:1.2px;height:26px;background:#3d5a78"></div>
<div class="a" style="left:986px;top:321px;width:1.2px;height:26px;background:#3d5a78"></div>
<div class="a" style="left:1005px;top:321px;width:1.2px;height:26px;background:#3d5a78"></div>
<div class="a" style="left:806px;top:326px;width:22px;height:16px;background:#fff;border:1px solid #222;background-image:conic-gradient(#ddd 25%,#fff 0 50%,#ddd 0 75%,#fff 0);background-size:6px 6px"></div>
<svg style="left:0;top:0" width="1042" height="666">
 <g fill="#111"><rect x="817" y="331" width="1.5" height="2"/><rect x="820" y="333" width="2" height="2"/><rect x="822.5" y="336" width="1.5" height="2"/><rect x="819" y="337" width="1.5" height="1.5"/><rect x="823.5" y="332" width="1.2" height="1.5"/></g>
</svg>
<div class="a" style="left:807px;top:352px;width:20px;height:20px;background-image:conic-gradient(#d8d8d8 25%,#fff 0 50%,#d8d8d8 0 75%,#fff 0);background-size:6px 6px"></div>
<div class="a" style="left:810px;top:379px;width:14px;height:11px;background:#fff"></div>
<div class="t" style="left:846.5px;top:327px;font-size:11px;color:#e8e8e8">颜料图层 2 (来自粘贴)</div>
<div class="t" style="left:846.5px;top:354px;font-size:11px;color:#d8d8d8">颜料图层 1</div>
<div class="a" style="left:780px;top:375px;width:260px;height:15px;overflow:hidden"><div class="t" style="left:66.5px;top:6px;font-size:11px;color:#d8d8d8">背景</div></div>
<svg style="left:0;top:0" width="1042" height="666">
 <defs><clipPath id="lc"><rect x="780" y="319" width="246" height="71"/></clipPath></defs>
 <g clip-path="url(#lc)">
 <g fill="none" stroke="#d0d0d0" stroke-width="1.2">
  <path d="M785,334 C789,327 796,327 800,334"/><path d="M786,336.5 C790,341 795,341 799,336.5"/>
  <path d="M785,361 C789,354 796,354 800,361"/><path d="M786,363.5 C790,368 795,368 799,363.5"/>
  <path d="M785,388 C789,381 796,381 800,388"/>
 </g>
 <g fill="#d0d0d0"><circle cx="792.5" cy="333" r="3.3"/><circle cx="792.5" cy="360" r="3.3"/><circle cx="792.5" cy="387" r="3.3"/></g>
 <g fill="none" stroke="#d8d8d8" stroke-width="1.1">
  <path d="M836,324 H843 V330 L840.5,332.5 H836"/><path d="M834,324.5 L840,330.5"/>
  <path d="M836,351 H843 V357 L840.5,359.5 H836"/><path d="M834,351.5 L840,357.5"/>
  <path d="M836,378 H843 V384 L840.5,386.5 H836"/><path d="M834,378.5 L840,384.5"/>
 </g>
 <g fill="#7f98b0"><rect x="971" y="332.5" width="12" height="8.5"/><path d="M977.5,332.5 V330 A4,4 0 0 0 975,327" fill="none" stroke="#7f98b0" stroke-width="1.5"/></g>
 <g fill="#6a6a6a"><rect x="971" y="359.5" width="12" height="8.5"/><path d="M977.5,359.5 V357 A4,4 0 0 0 975,354" fill="none" stroke="#6a6a6a" stroke-width="1.5"/></g>
 <g><path d="M972.5,389 V387 A4.5,4.5 0 0 1 981.5,387 V389" fill="none" stroke="#d8d8d8" stroke-width="1.6"/><rect x="970.5" y="388.5" width="12" height="1.5" fill="#d8d8d8"/></g>
 <text x="988.5" y="340" font-family="Liberation Serif" font-style="italic" font-size="19" fill="#7f98b0">α</text>
 <text x="988.5" y="367" font-family="Liberation Serif" font-style="italic" font-size="19" fill="#6a6a6a">α</text>
 <text x="988.5" y="394" font-family="Liberation Serif" font-style="italic" font-size="19" fill="#6a6a6a">α</text>
 <g fill="#7f98b0"><rect x="1007" y="327" width="5" height="5"/><rect x="1017" y="327" width="5" height="5"/><rect x="1012" y="332" width="5" height="5"/><rect x="1007" y="337" width="5" height="5"/><rect x="1017" y="337" width="5" height="5"/></g>
 <g fill="#8aa6c0"><rect x="1012" y="327" width="5" height="5"/><rect x="1007" y="332" width="5" height="5"/><rect x="1017" y="332" width="5" height="5"/><rect x="1012" y="337" width="5" height="5"/></g>
 <g fill="#5a5a5a"><rect x="1007" y="353" width="5" height="5"/><rect x="1017" y="353" width="5" height="5"/><rect x="1012" y="358" width="5" height="5"/><rect x="1007" y="363" width="5" height="5"/><rect x="1017" y="363" width="5" height="5"/></g>
 <g fill="#6e6e6e"><rect x="1012" y="353" width="5" height="5"/><rect x="1007" y="358" width="5" height="5"/><rect x="1017" y="358" width="5" height="5"/><rect x="1012" y="363" width="5" height="5"/></g>
 <g fill="#5a5a5a"><rect x="1007" y="380" width="5" height="5"/><rect x="1017" y="380" width="5" height="5"/><rect x="1012" y="385" width="5" height="5"/></g>
 <g fill="#6e6e6e"><rect x="1012" y="380" width="5" height="5"/><rect x="1007" y="385" width="5" height="5"/><rect x="1017" y="385" width="5" height="5"/></g>
 </g>
</svg>
<!-- layer scrollbar -->
<div class="a" style="left:1026px;top:321px;width:13px;height:69px;background:#3a3a3a"></div>
<div class="a" style="left:1027px;top:322px;width:12px;height:12px;border:1px solid #5a5a5a;background:#3e3e3e"></div>
<div class="a" style="left:1027px;top:335px;width:12px;height:33px;border:1px solid #555;background:#3a3a3a"></div>
<div class="a" style="left:1027px;top:376px;width:12px;height:13px;border:1px solid #5a5a5a;background:#3e3e3e"></div>
<svg style="left:0;top:0" width="1042" height="666">
 <path d="M1029.5,330 L1033,326.5 L1036.5,330 Z M1029.5,380.5 L1033,384 L1036.5,380.5 Z" fill="#a0a0a0"/>
</svg>
<!-- layer toolbar -->
<svg style="left:0;top:0" width="1042" height="666">
 <g fill="none" stroke="#d8d8d8" stroke-width="2">
  <path d="M795,396 V415 M785.5,405.5 H804.5"/>
  <path d="M832,398.5 H848 V412" stroke-width="1.5"/>
  <rect x="829.5" y="401" width="15.5" height="14" stroke-width="1.8"/>
  <path d="M861,400 L871,410.5 L881.5,400"/>
  <path d="M892.5,411 L903,400.5 L913.5,411"/>
  <path d="M925,399.5 H945.5 M925,405.5 H945.5 M925,411.5 H945.5" stroke-width="1.6"/>
 </g>
 <g fill="#d8d8d8"><circle cx="940" cy="399.5" r="1.8"/><circle cx="930" cy="405.5" r="1.8"/><circle cx="936" cy="411.5" r="1.8"/></g>
 <path d="M812,403 H819.5 L815.8,407 Z" fill="#a0a0a0"/>
 <g fill="#d8d8d8"><rect x="1016" y="398" width="18" height="2"/><path d="M1021,398 V396.5 A1.5,1.5 0 0 1 1022.5,395 H1027.5 A1.5,1.5 0 0 1 1029,396.5 V398 H1027.5 V396.5 H1022.5 V398 Z"/><path d="M1018,401.5 H1032 V413.5 A2,2 0 0 1 1030,415.5 H1020 A2,2 0 0 1 1018,413.5 Z"/></g>
</svg>
<!-- brush presets -->
<div class="t" style="left:805px;top:428px;font-size:11px;color:#d8d8d8">笔刷预设</div>
<div class="a" style="left:781px;top:446px;width:154px;height:24px;border:1px solid #333;border-radius:3px;background:linear-gradient(#4d4d4d,#444)"></div>
<div class="t" style="left:785px;top:451px;font-size:11.5px;color:#e0e0e0">全部</div>
<div class="a" style="left:937px;top:446px;width:55px;height:24px;border:1px solid #333;border-radius:3px;background:linear-gradient(#4d4d4d,#444)"></div>
<div class="t" style="left:956px;top:451px;font-size:11.5px;color:#e0e0e0">标签</div>
<div class="a" style="left:994px;top:446px;width:21px;height:24px;border:1px solid #333;border-radius:3px;background:linear-gradient(#4d4d4d,#444)"></div>

<svg style="left:0;top:0" width="1042" height="666">
 <path d="M920.5,456 H928.5 L924.5,460 Z" fill="#a0a0a0"/>
 <path d="M942.5,449.5 H950.5 V465.5 L946.5,461.5 L942.5,465.5 Z" fill="none" stroke="#d8d8d8" stroke-width="1.6"/>
 <path d="M984,462 H989 L986.5,464.5 Z" fill="#a0a0a0"/>
 <g fill="#d8d8d8"><rect x="998" y="451.5" width="13" height="2"/><rect x="998" y="456.5" width="13" height="2"/><rect x="998" y="461.5" width="13" height="2"/></g>
 <rect x="1020.5" y="448.5" width="15" height="17" fill="none" stroke="#d8d8d8" stroke-width="1.3"/>
 <path d="M1028,450 V457" stroke="#d8d8d8" stroke-width="1" stroke-dasharray="1 1"/>
</svg>
<div class="a" style="left:780px;top:470px;width:246px;height:137px;background:#3d3d3d;overflow:hidden">
<div class="a" style="left:2px;top:0.5px;width:58px;height:15.5px;background:#d4d4d4"></div><div class="a" style="left:2px;top:18px;width:58px;height:58px;background:#d4d4d4"></div><div class="a" style="left:2px;top:78px;width:58px;height:58px;background:#d4d4d4"></div><div class="a" style="left:62px;top:0.5px;width:58px;height:15.5px;background:#d4d4d4"></div><div class="a" style="left:62px;top:18px;width:58px;height:58px;background:#d4d4d4"></div><div class="a" style="left:62px;top:78px;width:58px;height:58px;background:#d4d4d4"></div><div class="a" style="left:122px;top:0.5px;width:58px;height:15.5px;background:#d4d4d4"></div><div class="a" style="left:122px;top:18px;width:58px;height:58px;background:#d4d4d4"></div><div class="a" style="left:122px;top:78px;width:58px;height:58px;background:#4d6e8f"></div><div class="a" style="left:125px;top:81px;width:52px;height:52px;background:#8cbde0"></div><div class="a" style="left:182px;top:0.5px;width:58px;height:15.5px;background:#d4d4d4"></div><div class="a" style="left:182px;top:18px;width:58px;height:58px;background:#d4d4d4"></div><div class="a" style="left:182px;top:78px;width:58px;height:58px;background:#d4d4d4"></div><div class="a" style="left:14px;top:3px;width:36px;height:12px;border-radius:0 0 18px 18px;background-image:conic-gradient(#fff 25%,#bbb 0 50%,#fff 0 75%,#bbb 0);background-size:6px 6px;opacity:.8"></div><div class="a" style="left:80px;top:0px;width:30px;height:11px;border-radius:0 0 15px 15px;background-image:conic-gradient(#fff 25%,#c0c0c0 0 50%,#fff 0 75%,#c0c0c0 0);background-size:6px 6px;opacity:.7"></div><div class="a" style="left:135px;top:3px;width:36px;height:10px;background-image:conic-gradient(#e8e8e8 25%,#c8c8c8 0 50%,#e8e8e8 0 75%,#c8c8c8 0);background-size:6px 6px;opacity:.7"></div><div class="a" style="left:182px;top:0.5px;width:58px;height:15.5px;background:linear-gradient(90deg,#3a3a3a 0%,#3a3a3a 25%,#555 40%,#b0b0b0 52%,#d4d4d4 60%)"></div><svg style="left:2px;top:18px;overflow:hidden" width="58" height="58"><defs>
<linearGradient id="pg1" x1="0" x2="1"><stop offset="0" stop-color="#d0d0d0"/><stop offset="1" stop-color="#333"/></linearGradient>
<linearGradient id="pg2" x1="0" x2="1"><stop offset="0" stop-color="#999"/><stop offset="1" stop-color="#333"/></linearGradient>
<linearGradient id="pg3" x1="0" x2="1"><stop offset="0" stop-color="#d4d4d4"/><stop offset="1" stop-color="#444"/></linearGradient>
<filter id="bl" x="-20%" y="-50%" width="140%" height="200%"><feGaussianBlur stdDeviation="1.2"/></filter>
</defs><path d="M21,48 C30,45 45,43 60,37" fill="none" stroke="#222" stroke-width="7.5" stroke-linecap="round"/><path d="M29.5,23.5 L36.5,30.5 L68.5,-1.5 L61.5,-8.5 Z" fill="#3a3a3a"/><path d="M46,11 L50,7" stroke="#666" stroke-width="2.5"/><path d="M29.8,23.8 L36.2,30.2 L23,37.5 Z" fill="#c8c8c8"/><circle cx="23.5" cy="37" r="1.2" fill="#333"/></svg><svg style="left:62px;top:18px;overflow:hidden" width="58" height="58"><path d="M17,42 C19,48 30,49 40,46 C48,44 54,41 60,38" fill="none" stroke="url(#pg1)" stroke-width="6" stroke-linecap="round"/><path d="M29.5,23.5 L36.5,30.5 L68.5,-1.5 L61.5,-8.5 Z" fill="#2a2a2a"/><path d="M46,11 L50,7" stroke="#555" stroke-width="2.5"/><path d="M29.8,23.8 L36.2,30.2 L23,37.5 Z" fill="#202020"/><circle cx="23.5" cy="37" r="1.2" fill="#333"/></svg><svg style="left:122px;top:18px;overflow:hidden" width="58" height="58"><path d="M17,43 C20,50 27,48 33,45 C40,42 50,43 60,42" fill="none" stroke="url(#pg2)" stroke-width="7" filter="url(#bl)"/><path d="M29.5,23.5 L36.5,30.5 L68.5,-1.5 L61.5,-8.5 Z" fill="#e6e6e6"/><path d="M46,11 L50,7" stroke="#bbb" stroke-width="2.5"/><path d="M29.8,23.8 L36.2,30.2 L23,37.5 Z" fill="#dcdcdc"/><path d="M29.5,23.5 L36.5,30.5" stroke="#c08050" stroke-width="1.2"/><circle cx="23.5" cy="37" r="1.2" fill="#333"/></svg><svg style="left:182px;top:18px;overflow:hidden" width="58" height="58"><path d="M17,44 C22,50 30,47 37,45 C44,43 47,51 52,48 C56,46 58,43 60,42" fill="none" stroke="#8a8a8a" stroke-width="7" filter="url(#bl)"/><path d="M29.5,23.5 L36.5,30.5 L68.5,-1.5 L61.5,-8.5 Z" fill="#8a8a8a"/><path d="M46,11 L50,7" stroke="#bbb" stroke-width="2.5"/><path d="M29.8,23.8 L36.2,30.2 L23,37.5 Z" fill="#e0e0e0"/><path d="M29.5,23.5 L36.5,30.5" stroke="#666" stroke-width="1.2"/><circle cx="23.5" cy="37" r="1.2" fill="#333"/></svg><svg style="left:2px;top:78px;overflow:hidden" width="58" height="58"><path d="M20,37 C18,44 24,48 29,45 C35,42 33,52 41,50 C49,48 55,43 60,39" fill="none" stroke="#2a2a2a" stroke-width="5.5" stroke-linecap="round"/><path d="M63,-4 L49,10" stroke="#505050" stroke-width="5"/><path d="M50,9 L37,22" stroke="#c8c8c8" stroke-width="4"/><path d="M37,22" stroke="#ccc"/><path d="M34.5,19.5 L39.5,24.5 C37,29 30,33 21,34 C24,31 29,24 34.5,19.5 Z" fill="#2a1414"/></svg><svg style="left:62px;top:78px;overflow:hidden" width="58" height="58"><path d="M20,37 C18,44 24,48 29,45 C35,42 33,52 41,50 C49,48 55,43 60,39" fill="none" stroke="url(#pg3)" stroke-width="5.5" stroke-linecap="round"/><path d="M63,-4 L49,10" stroke="#f0a030" stroke-width="5"/><path d="M50,9 L37,22" stroke="#c8c8c8" stroke-width="4"/><path d="M37,22" stroke="#ccc"/><path d="M34.5,19.5 L39.5,24.5 C37,29 30,33 21,34 C24,31 29,24 34.5,19.5 Z" fill="#7a4a30"/></svg><div class="a" style="left:125px;top:81px;width:52px;height:52px;overflow:hidden"><svg style="left:-3px;top:-3px;overflow:hidden" width="58" height="58"><path d="M56,6 L46,16" stroke="#a0703a" stroke-width="4.5"/><path d="M46.5,15.5 L35,27" stroke="#d8e4f0" stroke-width="3.2"/><path d="M33.5,25 L37,28.5 C35,31 31,34 26,35.5 C28,33 31,28 33.5,25 Z" fill="#1a2a3a"/><path d="M16,54 C22,50 30,42 33,45 C36,48 27,53 36,52 C44,51 50,47 57,42" fill="none" stroke="#2a4a80" stroke-width="1.8" stroke-linecap="round"/></svg></div><svg style="left:182px;top:78px;overflow:hidden" width="58" height="58"><path d="M64,-4 L38,22" stroke="#2a70c0" stroke-width="12"/><path d="M33,17 L43,27 L23,37.5 Z" fill="#d8b888"/><path d="M26.5,32 L28,33.5 L23,37.5 Z" fill="#444" stroke="#444" stroke-width="2"/><circle cx="18" cy="42" r="2.8" fill="#111"/><path d="M15,46 L21,44 M17,49 L23,46" stroke="#333" stroke-width="1.5"/><g stroke="#777" stroke-width="1.6" opacity=".85"><path d="M22,52 L25,46 M26,53 L30,45 M30,53 L34,44 M34,53 L38,42 M38,53 L42,40 M42,53 L46,38 M46,53 L50,36 M50,52 L54,34 M54,52 L58,33"/></g></svg>
</div>
<!-- preset scrollbar -->
<div class="a" style="left:1026px;top:471px;width:13px;height:136px;background:#3a3a3a"></div>
<div class="a" style="left:1026px;top:472px;width:13px;height:12px;border:1px solid #5a5a5a;background:#3e3e3e"></div>
<div class="a" style="left:1026px;top:487px;width:13px;height:26px;border:1px solid #555;background:#3a3a3a"></div>
<div class="a" style="left:1026px;top:594px;width:13px;height:12px;border:1px solid #5a5a5a;background:#3e3e3e"></div>
<svg style="left:0;top:0" width="1042" height="666">
 <path d="M1029,480.5 L1032.5,476.5 L1036,480.5 Z M1029,598 L1032.5,602 L1036,598 Z" fill="#a0a0a0"/>
</svg>
<!-- search -->
<div class="a" style="left:781px;top:608px;width:129px;height:24px;border-radius:3px;background:#3e3e3e"></div>
<div class="t" style="left:783px;top:613px;font-size:11.5px;color:#7a7a7a">搜索</div>
<div class="a" style="left:916px;top:613px;width:14px;height:14px;border-radius:2px;background:#3a3a3a"></div>
<svg style="left:0;top:0" width="1042" height="666"><path d="M918.5,619 L922,624.5 L927.5,614.5" fill="none" stroke="#d8d8d8" stroke-width="1.4"/></svg>
<div class="t" style="left:935px;top:613.5px;font-size:11px;color:#dcdcdc">仅在当前标签内搜索</div>
<svg style="left:0;top:0" width="1042" height="666">
 <g fill="#8a8a8a"><rect x="70" y="354" width="1.4" height="1.4"/><rect x="70" y="357" width="1.4" height="1.4"/><rect x="70" y="360" width="1.4" height="1.4"/><rect x="70" y="363" width="1.4" height="1.4"/><rect x="70" y="366" width="1.4" height="1.4"/><rect x="70" y="369" width="1.4" height="1.4"/></g>
 <path d="M1032.5,68.5 L1035,71 L1032.5,73.5 M1036,68.5 L1038.5,71 L1036,73.5" fill="none" stroke="#6a6a6a" stroke-width="1"/>
</svg>
<!-- status bar -->
<div class="a" style="left:1px;top:633px;width:1040px;height:30px;background:#4a4a4a"></div>
<svg style="left:0;top:0" width="1042" height="666">
 <rect x="8.5" y="641.5" width="14" height="14" fill="none" stroke="#d0d0d0" stroke-width="1.2"/>
 <circle cx="15.5" cy="648.5" r="4" fill="none" stroke="#d0d0d0" stroke-width="1" stroke-dasharray="1 1.2"/>
</svg>
<div class="t" style="left:38px;top:643px;font-size:12.5px;color:#d8d8d8">b) Ba...tails</div>
<div class="t" style="left:124px;top:643px;font-size:12px;color:#d8d8d8">RGB/透明...rc.icc</div>
<div class="a" style="left:531px;top:637.5px;width:146px;height:24px;border:1px solid #3a3a3a;background:#474747"></div>
<div class="t" style="left:535px;top:643px;font-size:12.5px;color:#e0e0e0">2,480 <u>x</u> 3,508 (34.6 MiB)</div>
<svg style="left:0;top:0" width="1042" height="666">
 <circle cx="697" cy="649.5" r="10.3" fill="#2e2e2e"/>
 <path d="M692,649.5 H702.5" stroke="#e8e8e8" stroke-width="1.2"/>
 <circle cx="691.5" cy="649.5" r="1.3" fill="#e8e8e8"/><circle cx="703" cy="649.5" r="1.3" fill="#e8e8e8"/>
</svg>
<div class="t" style="left:742.5px;top:643px;font-size:12.5px;color:#e0e0e0">0.00°</div>
<div class="t" style="left:851.5px;top:643px;font-size:12.5px;color:#e0e0e0">100.0%</div>
<div class="a" style="left:910px;top:648px;width:82px;height:4px;border-radius:2px;background:#333"></div>
<div class="a" style="left:910px;top:648px;width:30px;height:4px;border-radius:2px;background:#6e8fb0"></div>
<div class="a" style="left:936.5px;top:644.5px;width:11.5px;height:11px;border-radius:2px;background:#4e4e4e;border:1px solid #2e2e2e"></div>
<div class="a" style="left:994px;top:638px;width:22px;height:23px;border-radius:3px;border:1px solid #3a3a3a;background:#474747"></div>
<svg style="left:0;top:0" width="1042" height="666">
 <rect x="999" y="643.5" width="12" height="13" fill="none" stroke="#e0e0e0" stroke-width="1.3"/>
 <rect x="1003" y="648" width="4" height="4" fill="#e0e0e0"/>
 <g fill="#777"><rect x="1036" y="654" width="1.5" height="1.5"/><rect x="1033" y="657" width="1.5" height="1.5"/><rect x="1036" y="657" width="1.5" height="1.5"/><rect x="1030" y="660" width="1.5" height="1.5"/><rect x="1033" y="660" width="1.5" height="1.5"/><rect x="1036" y="660" width="1.5" height="1.5"/></g>
</svg>

</body></html>
